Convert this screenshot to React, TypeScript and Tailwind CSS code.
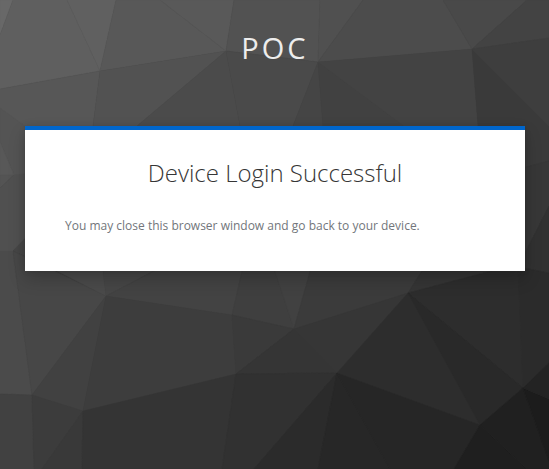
const facets: { fill: string; points: string }[] = [
  // top band
  { fill: '#686868', points: '0,0 13,0 0,35' },
  { fill: '#5f5f5f', points: '13,0 67,0 100,71 0,89 0,35' },
  { fill: '#606060', points: '67,0 116,0 100,71' },
  { fill: '#585858', points: '116,0 160,0 226,51 100,71' },
  { fill: '#595959', points: '160,0 234,0 226,51' },
  { fill: '#525252', points: '234,0 320,0 318,62 226,51' },
  { fill: '#505050', points: '320,0 363,0 318,62' },
  { fill: '#4c4c4c', points: '363,0 443,0 472,49 318,62' },
  { fill: '#494949', points: '443,0 527,0 472,49' },
  { fill: '#434343', points: '527,0 549,0 549,38 472,49' },
  // band running behind the top of the card
  { fill: '#575757', points: '0,89 100,71 93,126 80,200 14,175 0,142' },
  { fill: '#545454', points: '0,108 25,126 25,174 14,175 0,142' },
  { fill: '#525252', points: '100,71 226,51 137,126 80,200 93,126' },
  { fill: '#4b4b4b', points: '226,51 240,126 250,200 80,200 137,126' },
  { fill: '#4a4a4a', points: '226,51 318,62 293,126 250,200 240,126' },
  { fill: '#454545', points: '318,62 323,126 250,200 293,126' },
  { fill: '#414141', points: '318,62 404,126 400,200 250,200 323,126' },
  { fill: '#434343', points: '318,62 472,49 478,126 480,200 400,200 404,126' },
  { fill: '#3a3a3a', points: '472,49 549,126 549,161 480,180 478,126' },
  { fill: '#3e3e3e', points: '472,49 549,38 549,126' },
  // side edges
  { fill: '#585858', points: '0,142 14,175 0,175' },
  { fill: '#545454', points: '0,175 14,175 0,188' },
  { fill: '#505050', points: '0,188 14,175 80,168 80,190 13,251 0,251' },
  { fill: '#464646', points: '80,180 13,251 80,280' },
  { fill: '#373737', points: '480,179 549,161 549,206 518,267' },
  { fill: '#313131', points: '549,206 549,273 518,267' },
  // band below the card
  { fill: '#4b4b4b', points: '0,251 13,251 32,395 0,394' },
  { fill: '#474747', points: '13,251 106,296 32,395' },
  { fill: '#4a4a4a', points: '57,271 57,250 98,250 103,271 106,296' },
  { fill: '#464646', points: '103,271 98,250 195,250 153,271 106,296' },
  { fill: '#434343', points: '106,296 195,250 247,250 232,315' },
  { fill: '#3f3f3f', points: '232,315 247,250 268,250 294,329' },
  { fill: '#414141', points: '268,250 316,250 294,329' },
  { fill: '#3b3b3b', points: '294,329 316,250 435,250 408,293' },
  { fill: '#353535', points: '408,293 435,250 518,250 518,264' },
  { fill: '#2d2d2d', points: '408,293 518,264 523,388' },
  { fill: '#2b2b2b', points: '518,267 549,273 549,363 523,388' },
  // lower half
  { fill: '#414141', points: '106,296 83,411 32,395' },
  { fill: '#3d3d3d', points: '106,296 232,315 236,374 83,411' },
  { fill: '#3a3a3a', points: '232,315 294,329 236,374' },
  { fill: '#353535', points: '294,329 337,373 236,374' },
  { fill: '#363636', points: '294,329 408,293 337,373' },
  { fill: '#2d2d2d', points: '408,293 480,425 337,373' },
  { fill: '#292929', points: '408,293 523,388 480,425' },
  { fill: '#414141', points: '0,394 32,395 34,469 0,469' },
  { fill: '#3c3c3c', points: '32,395 83,411 42,469 34,469' },
  { fill: '#393939', points: '83,411 82,469 42,469' },
  { fill: '#343434', points: '83,411 236,374 222,469 82,469' },
  { fill: '#313131', points: '236,374 337,373 254,469 222,469' },
  { fill: '#2b2b2b', points: '337,373 318,469 254,469' },
  { fill: '#272727', points: '337,373 390,469 318,469' },
  { fill: '#262626', points: '337,373 480,425 454,469 390,469' },
  { fill: '#1f1f1f', points: '480,425 527,469 454,469' },
  { fill: '#202020', points: '480,425 523,388 552,469 527,469' },
  { fill: '#1c1c1c', points: '523,388 549,399 549,461' },
  { fill: '#232323', points: '523,388 549,363 549,399' },
]

function Backdrop() {
  return (
    <svg
      className="absolute inset-0 -z-10 h-full w-full"
      viewBox="0 0 549 469"
      preserveAspectRatio="xMidYMid slice"
      aria-hidden="true"
    >
      {facets.map(({ fill, points }) => (
        <polygon key={points} points={points} fill={fill} stroke={fill} strokeWidth="0.4" />
      ))}
    </svg>
  )
}

export default function App() {
  return (
    <div className="relative isolate min-h-screen bg-[#3c3c3c] pr-6 pl-[25px] font-['Open_Sans','Noto_Sans',sans-serif]">
      <Backdrop />
      <header className="pt-[31px] pb-[61px] text-center text-[29px] leading-[34px] tracking-[3px] text-[#ededed] uppercase">
        POC
      </header>
      <main className="mx-auto w-full max-w-[500px] border-t-4 border-[#0066cc] bg-white px-10 pt-[27px] pb-[35px] shadow-[0_8px_16px_rgba(3,3,3,0.2),0_0_6px_rgba(3,3,3,0.1)]">
        <h1 className="text-center text-2xl font-light text-[#363636]">Device Login Successful</h1>
        <p className="mt-[27px] text-xs leading-5 text-[#72767b]">
          You may close this browser window and go back to your device.
        </p>
      </main>
    </div>
  )
}
